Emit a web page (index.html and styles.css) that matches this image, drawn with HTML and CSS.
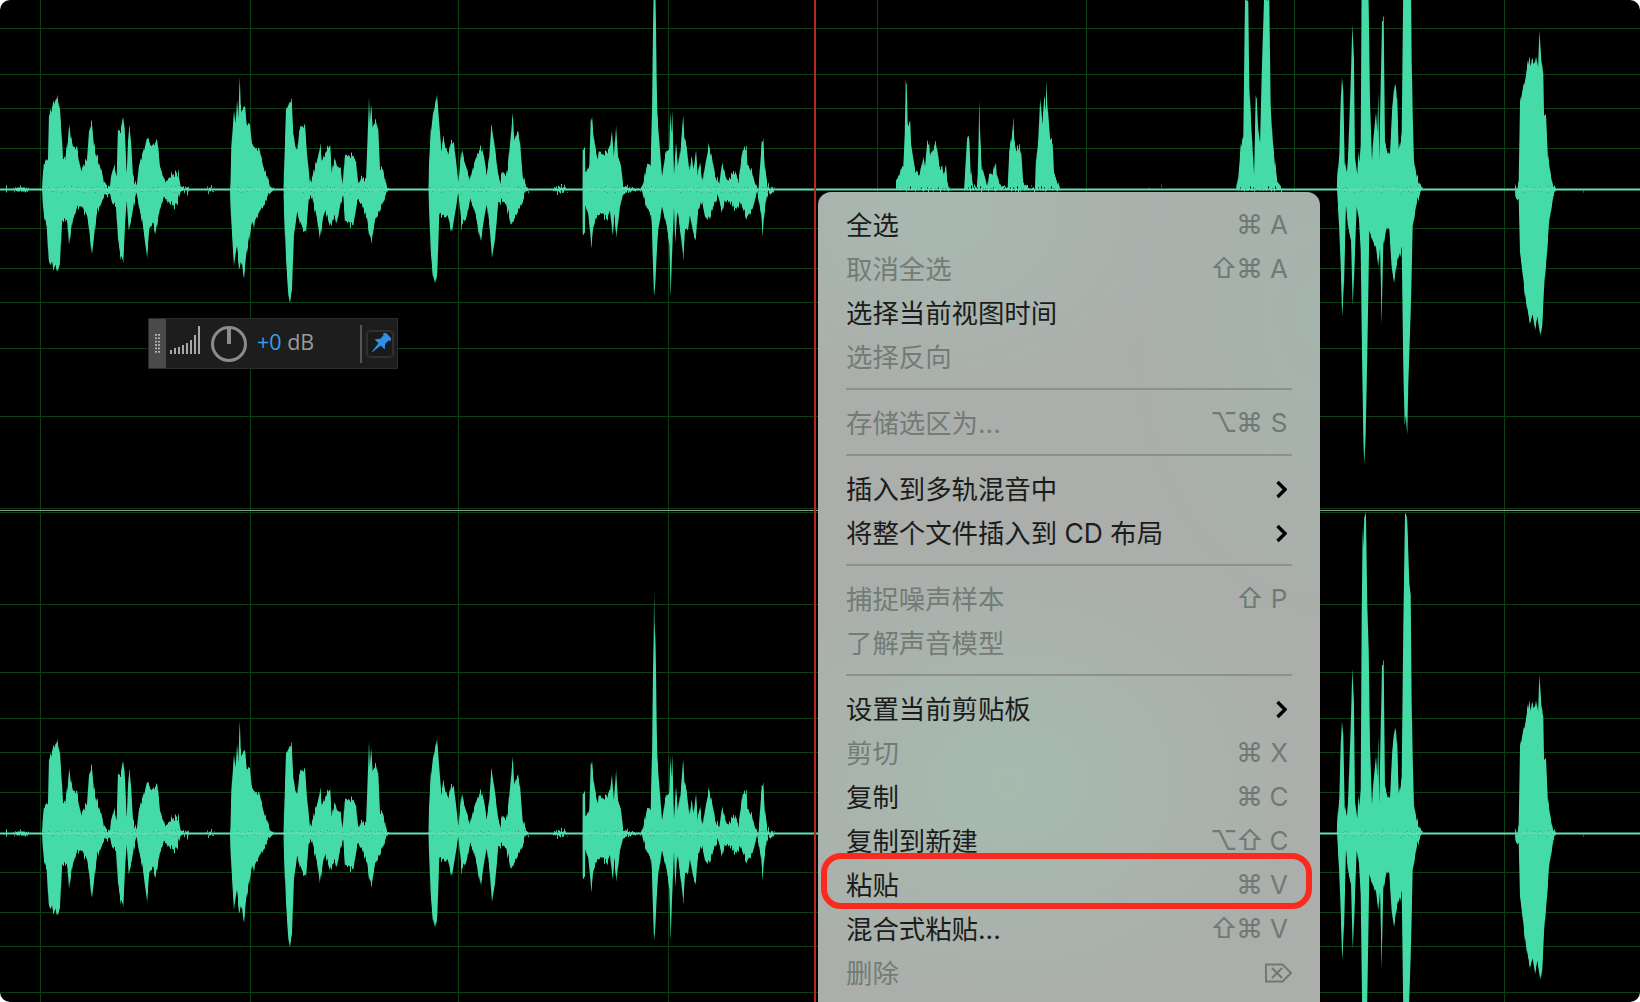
FILE: index.html
```html
<!DOCTYPE html>
<html lang="zh-CN">
<head>
<meta charset="utf-8">
<meta name="viewport" content="width=device-width, initial-scale=1">
<title>波形编辑器</title>
<link rel="stylesheet" href="styles.css">
</head>
<body>

<div class="editor">

  <svg class="wave-view" width="1640" height="1002" viewBox="0 0 1640 1002" xmlns="http://www.w3.org/2000/svg">
    <defs>
      <path id="peaks-top" d="M0,0 L6,0 6,-3 7,-3 7,0 12,0 18,-2 26,-2 30,0 42,0 42.7,-13 44,-26 48,-31 49,-73 52,-84 53.5,-92 55,-88 57,-93 60,-79 62,-51 63,-31 65,-29 68,-51 69.3,-66 70.7,-53 73,-43 76.7,-42 79,-29 81,-19 85,-28 87,-29 89,-58 91.7,-67 94,-44 98,-29 102,-18 104,-6 110,-3 111,-13 114,-24 116.7,-14 118,-59 121,-61 123.3,-73 124.7,-59 126.7,-16 128,-49 129.3,-65 131,-49 133,-13 136.7,-3 138.7,-23 141.7,-33 145,-43 147.3,-53 150,-46 153,-43 157.3,-50 160,-23 165,-8 171.7,-14 175,-16 178.3,-16 180.7,-3 186.7,-1.5 187.3,-4 189.3,0 205,0 210,-2 215,0 230,0 230.5,-9 231.3,-43 234,-79 235.5,-66 237,-90 238.3,-73 239.7,-114 240.7,-83 242.3,-79 245,-84 246.7,-66 250,-63 251.7,-46 256.7,-41 258.7,-43 263.3,-24 266.7,-14 270,-3 275,0 283.5,0 284,-21 286,-79 290,-88 291.7,-89 293.3,-58 295.3,-43 297.3,-39 299.3,-59 302,-64 305,-64 307.3,-33 310,-6 312.7,-13 315,-24 318.3,-33 320.3,-44 322,-29 324.7,-34 327.7,-41 330,-44 331.7,-19 335.3,-31 337.3,-23 340.7,-21 342.7,-4 344.7,-34 348.3,-33 350.7,-36 356,-29 358.3,-4 361.3,-13 366,-9 367.3,-43 369,-93 370,-66 371.3,-84 372.7,-63 376,-68 378.3,-58 380,-21 383.3,-19 386.7,-3 390,0 428.5,0 429,-26 430.7,-56 432.7,-74 435.3,-86 437,-95 438.7,-73 441.3,-41 443.3,-52 445,-43 448.3,-36 450.7,-48 454,-46 456.7,-23 458.3,-6 461.7,-41 464,-29 466.7,-21 470,-9 472.7,-21 476.7,-33 481,-43 484,-33 486.7,-16 489.3,-33 491.3,-66 494,-49 498.3,-14 500,-8 502.7,-18 506,-14 508,-24 510.7,-53 512.7,-78 514.3,-48 517.7,-59 520,-46 522.7,-14 526,-3 530,0 552,0 556,-2 560,-3 564,-2 568,0 582.5,0 582.7,-41 585,-41 585.3,-16 589.3,-24 590.7,-69 591.7,-75 593.3,-56 595.3,-41 597.7,-31 598.7,-39 602.7,-34 607.3,-39 610,-43 612,-58 614,-33 616,-63 618,-33 620.7,-26 623.3,-4 630,-2 640,0 643.3,-6 646.7,-23 650.7,-26 652,-76 653,-163 653.7,-200 654.1,-244 654.5,-213 655.5,-190 656,-163 656.7,-109 657.3,-76 660,-39 662,-13 665,-33 666.7,-39 669.3,-41 670.3,-78 671.3,-56 672.3,-78 674,-16 676,-46 678,-23 680.7,-43 683.3,-74 684.3,-51 686.7,-43 689.3,-19 691.7,-34 693.3,-19 696,-39 697.7,-16 700,-26 702.7,-9 706,-29 709,-43 711.7,-33 715,-14 719.3,-6 721.7,-26 725,-16 727.3,-8 730,-13 735,-18 738.3,-9 742.7,-39 746.7,-43 747.3,-23 751.7,-19 755,-6 758.3,0 761.7,-46 763.3,-48 765,-21 767.3,-6 770,0 771.7,-3 775,0 896,0 896,-9 899.3,-14 900.7,-20 903.3,-23 904.7,-53 905.7,-108 906.7,-108 907.7,-63 910,-69 911,-46 913.3,-31 915,-21 919.3,-14 921.7,-23 923.3,-34 925,-23 927.3,-48 929,-48 930,-33 932.7,-39 935.7,-48 937.3,-39 939.3,-23 942.3,-23 943.3,-14 946,-24 947.3,-9 950,0 964,0 965,-16 967.3,-54 969.3,-51 970.7,-18 973.3,-3 977,-3 977.7,-13 978.7,-58 979.3,-91 980,-56 981.7,-23 985,-11 987.3,-3 989,-16 992.3,-14 995.7,-29 996.7,-16 999.3,-6 1004,-2 1007.7,-3 1009.3,-39 1011.7,-53 1013.3,-69 1014.3,-49 1016.7,-39 1019.3,-45 1021.3,-36 1023.3,-6 1028.3,-3 1030,0 1035,-3 1036,-29 1038.3,-49 1040.3,-93 1042.3,-66 1044.3,-93 1045.7,-83 1046.3,-110 1047.3,-86 1050,-51 1052.7,-46 1054,-16 1058.3,-6 1060.7,0 1149,0 1149.3,-3 1149.7,0 1161,0 1161.3,-3 1161.7,0 1236,0 1238.3,-13 1240.7,-43 1243.3,-54 1245,-190 1248.3,-190 1249.3,-103 1252.7,-39 1254,-14 1255.7,-91 1256.7,-91 1258.3,-59 1260,-46 1261.7,-113 1264,-190 1269.3,-190 1270.7,-83 1272.7,-49 1275,-26 1277.3,-8 1283.3,0 1336.7,0 1337.3,-13 1339.3,-35 1340.7,-88 1342,-112 1343.3,-98 1344.7,-28 1346.7,-15 1348.3,-37 1350.7,-108 1352.3,-168 1354,-130 1355,-32 1357.3,-15 1358.3,-38 1359.3,-27 1360.7,-45 1361.7,-222 1362.7,-307 1363.3,-285 1364.3,-321 1366,-315 1367.3,-227 1368.7,-182 1370,-85 1372,-28 1373.3,-52 1376,-77 1377.3,-58 1378.3,-98 1379.3,-28 1380.3,-85 1382,-170 1383.7,-170 1385,-47 1388.3,-35 1390,-38 1392.3,-82 1394,-98 1395.7,-107 1397.3,-85 1398.7,-40 1401.7,-55 1403.3,-208 1405,-320 1406.7,-320 1407.7,-298 1409.3,-248 1410.7,-238 1411.7,-132 1412.7,-75 1414,-28 1416.7,-13 1420,-5 1423.3,0 1515,0 1515.3,-7 1517,0 1518.7,-8 1520,-87 1523.3,-103 1525.3,-110 1527.3,-122 1529.3,-132 1530.7,-124 1532,-132 1534.7,-125 1536,-133 1538,-122 1539.3,-159 1541.3,-128 1543.3,-115 1544,-75 1546,-75 1548,-32 1550.7,-15 1553.3,-3 1556.7,0 1562.5,0 1562.7,-2 1563,0 1583,0 1583.3,-3 1583.7,0 1640,0 Z"/>
      <path id="peaks-bottom" d="M0,0 L6,0 6,4 7,4 7,0 12,0 18,2 26,2 30,0 42,0 42.7,14 44,27 46.7,36 48.7,71 50.7,77 51.7,72 53.3,81 55.3,77 57.3,84 60,74 62,31 65,32 67.3,31 69,56 70.7,44 72.7,31 76.7,19 80,17 82.3,16 85,24 87.3,27 89.3,41 91.7,66 94,47 96.7,24 101.7,12 105,6 110,4 111.7,12 116,17 118,51 120.7,67 123.3,71 125,37 126.7,11 128.7,41 131.3,31 134,14 136.7,4 139.3,19 142,31 144.3,47 147,67 149.3,39 152.7,34 155,43 157.3,34 160,19 164,7 170,14 175,17 178.3,11 180.7,2 186.7,0 187.3,6 189.3,0 205,0 210,2 215,0 230,0 230.3,11 231.3,34 234,76 236.7,57 239.3,81 241.7,71 243.7,89 246,67 250,44 252.7,32 254,39 255,31 260,21 263.3,17 268.3,6 272,2 275,0 283.5,0 284,21 286,71 288.3,104 290,113 292,101 294,44 297.3,22 300,34 306,43 308.7,11 311.7,6 313.3,14 316.7,27 320,49 323.3,27 325,21 330,37 335,27 336.7,34 340,17 343.3,6 345,31 353.3,36 357.3,11 361.7,14 367.3,31 369.3,46 371.3,52 375,31 380,21 385,7 388,0 428.5,0 429,19 430.7,62 432.7,84 435,95 437.3,84 439.3,24 445,27 448.3,27 451.7,44 456.7,14 458.3,4 461.7,37 466.7,27 470,11 473.3,17 476.7,31 480.7,53 484,31 486.7,14 490,41 492,69 495,51 498.3,14 501.7,11 506,14 508.3,24 510.7,36 517.3,24 521.7,14 526,2 530,0 552,0 556,2 560,3 564,2 568,0 582.5,0 582.7,44 585,42 585.3,17 588.3,24 590,41 591.3,57 593.3,37 596.7,27 601.7,24 606.7,30 610,21 612.7,47 614.3,26 616.7,47 620,17 623.3,4 630,2 641.7,0 643.3,7 646.7,19 650.7,24 652,41 652.7,66 654,105 655.3,94 656.7,66 658.3,41 662,17 666.7,37 669.3,54 670.7,106 672,67 674,17 675.3,55 677.3,21 680.7,44 683.3,69 685,41 688.3,39 690,24 693.3,44 695.7,51 697.7,24 701.7,11 705,27 708.3,31 713.3,17 718.3,7 722.3,22 725,11 730,12 735.7,21 740,12 746.7,29 752.7,19 757.3,2 761,24 762.7,46 764.3,24 767.3,4 771.7,4 775,0 1337,0 1337.3,7 1339,34 1340.7,77 1342.3,126 1344,94 1346,17 1348.3,39 1351,51 1352.7,117 1354.3,81 1356.7,17 1359,31 1360.7,61 1362,164 1363.3,244 1364.3,277 1365.7,244 1367.3,164 1369.3,41 1372.7,51 1376,59 1378.3,77 1380,57 1381.7,131 1383.3,57 1386.7,37 1389.3,41 1391.7,77 1394,92 1396.7,74 1399.3,67 1401.7,57 1403.3,177 1404.7,237 1406,227 1407.3,244 1408.3,191 1410.7,124 1412.7,37 1416.7,14 1421.7,0 1515,0 1515.3,7 1518.7,11 1520,64 1522.7,84 1525,104 1527.3,121 1530,134 1532.7,126 1535,139 1537.3,128 1540.3,146 1542.3,134 1544.3,94 1546.7,67 1549.3,32 1553.3,7 1556.7,0 1640,0 Z"/>
      <clipPath id="clip-upper"><rect x="0" y="0" width="1640" height="510"/></clipPath>
      <clipPath id="clip-lower"><rect x="0" y="511" width="1640" height="491"/></clipPath>
      <!-- per-column noise so the edges look like sampled audio -->
      <filter id="rough" filterUnits="userSpaceOnUse" x="0" y="-340" width="1640" height="700" color-interpolation-filters="sRGB">
        <feTurbulence type="fractalNoise" baseFrequency="0.7 0.002" numOctaves="2" seed="4"/>
        <feColorMatrix type="matrix" values="1 0 0 0 0  0 0 0 0 0.5  0 0 0 0 0.5  0 0 0 0 1"/>
        <feDisplacementMap in="SourceGraphic" scale="14" xChannelSelector="G" yChannelSelector="R"/>
      </filter>
    </defs>

    <path class="grid" d="M40.5 0V1002M250.5 0V1002M458.5 0V1002M668.5 0V1002M877.5 0V1002M1086.5 0V1002M1294.5 0V1002M1504.5 0V1002"/>
    <path class="grid" d="M0 28.5H1640M0 74.5H1640M0 108.5H1640M0 148.5H1640M0 228.5H1640M0 268.5H1640M0 302.5H1640M0 348.5H1640M0 416.5H1640M0 508.5H1640M0 512.5H1640M0 604.5H1640M0 672.5H1640M0 718.5H1640M0 752.5H1640M0 792.5H1640M0 872.5H1640M0 912.5H1640M0 946.5H1640M0 992.5H1640"/>
    <path class="channel-line" d="M0 510.5H1640"/>

    <g clip-path="url(#clip-upper)">
      <g transform="translate(0 189.5)">
        <g filter="url(#rough)">
          <use href="#peaks-top" class="peaks"/>
          <use href="#peaks-bottom" class="peaks"/>
        </g>
        <path class="zero-line" d="M0 0H1640"/>
      </g>
    </g>
    <g clip-path="url(#clip-lower)">
      <g transform="translate(0 833.5)">
        <g filter="url(#rough)">
          <use href="#peaks-top" class="peaks"/>
          <use href="#peaks-bottom" class="peaks"/>
        </g>
        <path class="zero-line" d="M0 0H1640"/>
      </g>
    </g>

    <path class="playhead" d="M815 0V1002"/>
  </svg>

  <!-- gain HUD -->
  <div class="hud">
    <div class="hud-grip"><span></span></div>
    <svg class="hud-meter" width="30" height="28" viewBox="0 0 30 28" xmlns="http://www.w3.org/2000/svg">
      <path d="M1 28V24M5 28V22M9 28V21M13 28V19M17 28V17M21 28V14M25 28V9M29 28V0"/>
    </svg>
    <svg class="hud-knob" width="36" height="36" viewBox="0 0 36 36" xmlns="http://www.w3.org/2000/svg">
      <circle cx="18" cy="18" r="16.5"/>
      <path d="M18 1V18"/>
    </svg>
    <div class="hud-value"><span class="hud-gain">+0</span> dB</div>
    <div class="hud-divider"></div>
    <div class="hud-pin">
      <svg width="22" height="22" viewBox="0 0 20 20" xmlns="http://www.w3.org/2000/svg">
        <g transform="rotate(45 10 10) translate(1 -1)">
          <path d="M4.500 0H13.500V3H12.300V7.500L15.500 11.500H2.500L5.700 7.500V3H4.500Z"/>
          <path d="M7.500 11H10.500L9.400 21H8.600Z"/>
        </g>
      </svg>
    </div>
  </div>

  <!-- context menu -->
  <div class="menu">
    <div class="menu-row"><span>全选</span><span class="keys"><i>⌘</i><b>A</b></span></div>
    <div class="menu-row off"><span>取消全选</span><span class="keys"><i>⇧</i><i>⌘</i><b>A</b></span></div>
    <div class="menu-row"><span>选择当前视图时间</span></div>
    <div class="menu-row off"><span>选择反向</span></div>
    <div class="menu-sep"></div>
    <div class="menu-row off"><span>存储选区为...</span><span class="keys"><i>⌥</i><i>⌘</i><b>S</b></span></div>
    <div class="menu-sep"></div>
    <div class="menu-row"><span>插入到多轨混音中</span>
      <svg class="chevron" width="12" height="19" viewBox="0 0 12 19" xmlns="http://www.w3.org/2000/svg"><path d="M2.500 2L10 9.500L2.500 17"/></svg>
    </div>
    <div class="menu-row"><span>将整个文件插入到 CD 布局</span>
      <svg class="chevron" width="12" height="19" viewBox="0 0 12 19" xmlns="http://www.w3.org/2000/svg"><path d="M2.500 2L10 9.500L2.500 17"/></svg>
    </div>
    <div class="menu-sep"></div>
    <div class="menu-row off"><span>捕捉噪声样本</span><span class="keys"><i>⇧</i><b>P</b></span></div>
    <div class="menu-row off"><span>了解声音模型</span></div>
    <div class="menu-sep"></div>
    <div class="menu-row"><span>设置当前剪贴板</span>
      <svg class="chevron" width="12" height="19" viewBox="0 0 12 19" xmlns="http://www.w3.org/2000/svg"><path d="M2.500 2L10 9.500L2.500 17"/></svg>
    </div>
    <div class="menu-row off"><span>剪切</span><span class="keys"><i>⌘</i><b>X</b></span></div>
    <div class="menu-row"><span>复制</span><span class="keys"><i>⌘</i><b>C</b></span></div>
    <div class="menu-row"><span>复制到新建</span><span class="keys"><i>⌥</i><i>⇧</i><b>C</b></span></div>
    <div class="menu-row"><span>粘贴</span><span class="keys"><i>⌘</i><b>V</b></span></div>
    <div class="menu-row"><span>混合式粘贴...</span><span class="keys"><i>⇧</i><i>⌘</i><b>V</b></span></div>
    <div class="menu-row off"><span>删除</span>
      <svg class="del-key" width="27" height="20" viewBox="0 0 27 20" xmlns="http://www.w3.org/2000/svg">
        <path d="M1 1.500H17.500L26 10L17.500 18.500H1Z"/>
        <path d="M7 5L17 15M17 5L7 15"/>
      </svg>
    </div>
    <div class="highlight"></div>
  </div>

</div>

</body>
</html>
```

FILE: styles.css
```css
body { margin: 0; background: #fff; }

.editor {
  position: relative;
  width: 1640px;
  height: 1002px;
  background: #000;
  border-radius: 10px;
  overflow: hidden;
  font-family: Inter, "Noto Sans CJK SC", sans-serif;
}

.wave-view { position: absolute; left: 0; top: 0; display: block; }
.grid { fill: none; stroke: #0d3f11; stroke-width: 1; }
.channel-line { fill: none; stroke: #8a9a8c; stroke-width: 1; }
.peaks { fill: #45dba9; }
.zero-line { fill: none; stroke: #5ee0b3; stroke-width: 2; }
.playhead { fill: none; stroke: #b42a20; stroke-width: 2; }

/* gain HUD */
.hud {
  position: absolute;
  left: 148px;
  top: 318px;
  width: 250px;
  height: 51px;
  box-sizing: border-box;
  display: flex;
  align-items: center;
  background: rgba(30, 30, 30, 0.96);
  border: 1px solid #2b2b2b;
  font-family: "Open Sans", sans-serif;
}
.hud-grip {
  width: 17px;
  align-self: stretch;
  display: flex;
  align-items: center;
  justify-content: center;
  background: #4a4a4a;
}
.hud-grip span {
  width: 6px;
  height: 20px;
  background: radial-gradient(circle at 1px 1px, #b4b4b4 1.2px, transparent 1.2px) 0 0 / 3px 3.4px;
}
.hud-meter { margin-left: 4px; margin-top: -7px; }
.hud-meter path { fill: none; stroke: #a8a8a8; stroke-width: 2; }
.hud-knob { margin-left: 11px; }
.hud-knob circle { fill: none; stroke: #8c8c8c; stroke-width: 3; }
.hud-knob path { fill: none; stroke: #8c8c8c; stroke-width: 4; }
.hud-value {
  margin-left: 10px;
  flex: 1;
  font-size: 21.5px;
  line-height: 30px;
  margin-top: -3px;
  color: #9a9a9a;
}
.hud-gain { color: #3a9ce9; }
.hud-divider { width: 2px; height: 38px; background: #555; }
.hud-pin {
  margin-left: 4px;
  margin-right: 3px;
  width: 28px;
  height: 28px;
  box-sizing: border-box;
  display: flex;
  align-items: center;
  justify-content: center;
  background: #1a1a1a;
  border: 2px solid #303030;
  border-radius: 5px;
}
.hud-pin path { fill: #2f8fe6; }

/* context menu */
.menu {
  position: absolute;
  left: 818px;
  top: 192px;
  width: 502px;
  box-sizing: border-box;
  padding: 11px 28px 11px 28px;
  border-radius: 13px 13px 0 0;
  background:
    radial-gradient(ellipse 300px 240px at 190px 590px, #a6bbaf 0%, rgba(166, 187, 175, 0) 100%),
    radial-gradient(ellipse 260px 200px at 120px 20px, #a8b9b1 0%, rgba(168, 185, 177, 0) 100%),
    radial-gradient(ellipse 200px 320px at 500px 120px, #a5b4ad 0%, rgba(165, 180, 173, 0) 100%),
    #abaeab;
}
.menu-row {
  display: flex;
  align-items: center;
  justify-content: space-between;
  height: 44px;
  font-size: 26.4px;
  line-height: 44px;
  color: #1b1c1b;
}
.menu-row.off { color: #727c77; }
.menu-sep { height: 2px; margin: 9px 0 11px; background: #8d908e; }
.keys { display: flex; align-items: center; color: #6f7a75; }
.keys i {
  width: 26px;
  text-align: center;
  font-family: Inter, "DejaVu Sans", sans-serif;
  font-style: normal;
  font-size: 27px;
}
.keys b {
  width: 24px;
  box-sizing: border-box;
  margin-left: 6px;
  padding-right: 2px;
  text-align: center;
  font-weight: 400;
  font-size: 26px;
}
.chevron { margin-right: 5px; }
.chevron path { fill: none; stroke: #000; stroke-width: 3.4; }
.del-key path { fill: none; stroke: #6f7a75; stroke-width: 2; }

/* red annotation round the paste row */
.highlight {
  position: absolute;
  left: 3px;
  top: 661px;
  width: 491px;
  height: 56px;
  box-sizing: border-box;
  border: 6px solid #fa2a1f;
  border-radius: 20px;
}
```
